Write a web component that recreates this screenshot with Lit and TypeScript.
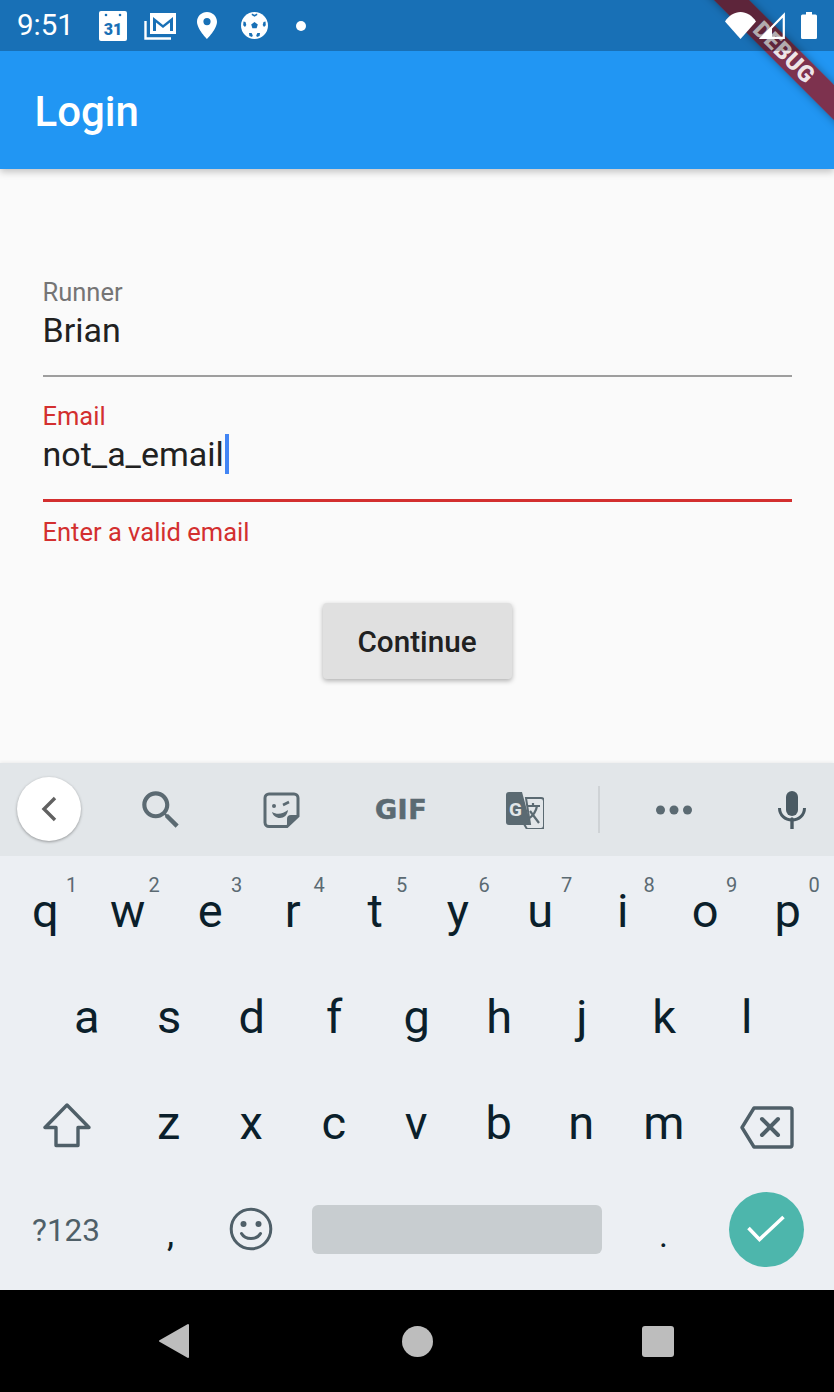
import { LitElement, html, css } from 'lit';
import { customElement } from 'lit/decorators.js';

const ROW1 = [['q', '1'], ['w', '2'], ['e', '3'], ['r', '4'], ['t', '5'], ['y', '6'], ['u', '7'], ['i', '8'], ['o', '9'], ['p', '0']];
const ROW2 = ['a', 's', 'd', 'f', 'g', 'h', 'j', 'k', 'l'];
const ROW3 = ['z', 'x', 'c', 'v', 'b', 'n', 'm'];

const ICON = '#5b6a72';
const SOFT = '#1970b6';

@customElement('app-root')
export class AppRoot extends LitElement {
  static styles = css`
    :host {
      display: flex;
      flex-direction: column;
      position: relative;
      width: 834px;
      height: 1392px;
      overflow: hidden;
      background: #fafafa;
      font-family: Roboto, 'Liberation Sans', sans-serif;
    }
    svg { display: block; }

    /* system bar sits over the app, so it also darkens the debug ribbon */
    .status {
      position: absolute;
      top: 0;
      left: 0;
      right: 0;
      z-index: 3;
      height: 51px;
      display: flex;
      align-items: center;
      background: rgba(0, 0, 0, 0.25);
      color: #fff;
    }
    .time { width: 72.5px; padding-left: 17px; font-size: 29.5px; line-height: 51px; }
    .slot { width: 47px; display: flex; justify-content: center; }
    .status-right { margin-left: auto; display: flex; align-items: center; padding-right: 17px; }
    .wifi { margin-right: 3px; }
    .signal { margin-right: 16px; }

    .appbar {
      height: 169px;
      box-sizing: border-box;
      flex: none;
      display: flex;
      align-items: center;
      padding: 53px 0 0 34.5px;
      background: #2196f3;
      color: #fff;
      font-size: 42px;
      font-weight: 500;
      box-shadow: 0 3px 7px rgba(0, 0, 0, 0.22);
      position: relative;
    }

    main {
      flex: 1;
      display: flex;
      flex-direction: column;
      padding: 109px 42.5px 0;
    }
    .label { font-size: 25.5px; line-height: 28px; color: #757575; }
    .value { font-size: 34px; line-height: 50px; margin-top: -1px; color: #212121; display: flex; align-items: center; }
    .line { height: 2px; background: #9e9e9e; margin-top: 20px; }
    .email { margin-top: 25px; }
    .email .label { color: #d32f2f; }
    .caret { width: 4px; height: 40px; margin-left: 1px; background: #4285f4; }
    .email .line { height: 3px; background: #d32f2f; margin-top: 20px; }
    .error { font-size: 25.5px; line-height: 28px; color: #d32f2f; margin-top: 16px; }
    .continue {
      align-self: center;
      width: 189px;
      height: 76px;
      margin-top: 57px;
      display: flex;
      align-items: center;
      justify-content: center;
      background: #e0e0e0;
      border-radius: 4px;
      color: #212121;
      font-size: 29.7px;
      font-weight: 500;
      box-shadow: 0 2px 5px rgba(0, 0, 0, 0.3);
    }

    .keyboard { flex: none; background: #eceff3; box-shadow: 0 -1px 3px rgba(0, 0, 0, 0.06); }
    .strip {
      height: 93px;
      display: grid;
      grid-template-columns: 98px 126px 114px 126px 122px 26px 124px 98px;
      align-items: center;
      justify-items: center;
      background: #e2e6e9;
    }
    .back {
      width: 64px;
      height: 64px;
      margin-top: -1px;
      border-radius: 50%;
      background: #fff;
      display: flex;
      align-items: center;
      justify-content: center;
      box-shadow: 0 1px 3px rgba(0, 0, 0, 0.35);
    }
    .gif { font-size: 27px; font-weight: 900; color: #5b6a72; letter-spacing: 0.5px; font-family: 'DejaVu Sans', sans-serif; -webkit-text-stroke: 0.6px #5b6a72; }
    .divider { width: 2px; height: 47px; background: #cfd3d6; }
    .mic { margin-left: 14px; }

    .keys { display: flex; flex-direction: column; padding: 2px 0 8px; }
    .row { height: 106px; display: flex; align-items: center; font-size: 47px; color: #0b1f2b; }
    .row.first { padding-left: 4px; }
    .row.second { padding-left: 45.5px; }
    .row.third { padding-left: 24.5px; }
    .row.fourth { padding-left: 24px; }
    .key { position: relative; width: 82.5px; text-align: center; line-height: 60px; }
    .num { position: absolute; top: -7px; left: 62px; font-size: 20px; line-height: 22px; color: #5b6a72; }
    .wide { width: 84px; display: flex; justify-content: center; }
    .shift { margin-top: 5px; margin-right: 19px; }
    .del { margin-left: 20px; margin-top: 9px; }
    .mode { font-size: 31.5px; color: #4f5f68; line-height: 60px; width: 84px; padding-top: 3px; text-align: center; }
    .comma { width: 105px; margin-left: 10px; text-align: center; font-size: 36px; line-height: 60px; padding-top: 10px; }
    .smile { width: 44px; margin-left: 6px; display: flex; justify-content: center; }
    .space { width: 290px; height: 49px; margin-left: 38.5px; background: #c8cdd0; border-radius: 6px; }
    .dot { width: 124px; text-align: center; font-size: 34px; line-height: 60px; padding-top: 12px; }
    .go {
      width: 75px;
      height: 75px;
      margin-left: 3px;
      border-radius: 50%;
      background: #4db6ac;
      display: flex;
      align-items: center;
      justify-content: center;
    }

    .nav {
      flex: none;
      height: 102px;
      display: grid;
      grid-template-columns: 1fr 1fr 1fr;
      align-items: center;
      justify-items: center;
      background: #000;
    }
    .nav > :first-child { margin-left: 70px; }
    .nav > :last-child { margin-right: 74px; }
    .home { width: 31px; height: 31px; border-radius: 50%; background: #bdbdbd; }
    .recent { width: 32px; height: 31px; border-radius: 3px; background: #bdbdbd; }

    .banner {
      position: absolute;
      z-index: 2;
      left: 674px;
      top: 40px;
      width: 220px;
      height: 25px;
      transform: rotate(45deg);
      display: flex;
      align-items: center;
      justify-content: center;
      background: rgba(135, 39, 60, 0.9);
      box-shadow: 0 0 8px rgba(0, 0, 0, 0.35);
      color: rgba(255, 255, 255, 0.9);
      font-size: 23px;
      font-weight: 900;
      letter-spacing: 0.5px;
    }
  `;

  private statusIcons() {
    return html`
      <div class="slot">
        <svg width="28" height="30" viewBox="0 0 28 30">
          <path d="M2 0h24a2 2 0 0 1 2 2v26a2 2 0 0 1-2 2H2a2 2 0 0 1-2-2V2a2 2 0 0 1 2-2z" fill="#fff" />
          <circle cx="7" cy="4" r="1.300" fill="${SOFT}" />
          <circle cx="21" cy="4" r="1.300" fill="${SOFT}" />
          <text x="14" y="24" text-anchor="middle" font-family="Roboto" font-weight="900" font-size="16" fill="${SOFT}">31</text>
        </svg>
      </div>
      <div class="slot">
        <svg width="32" height="28" viewBox="0 0 32 28">
          <path d="M1.500 9v17.500H27" fill="none" stroke="#fff" stroke-width="2.400" />
          <path d="M6 1h26v21H6z" fill="#fff" />
          <path d="M9 19V5l10 8 10-8v14h-3V10.500l-7 5.500-7-5.500V19z" fill="${SOFT}" />
        </svg>
      </div>
      <div class="slot">
        <svg width="20" height="27" viewBox="0 0 20 27">
          <path d="M10 0C4.500 0 0 4.300 0 9.700 0 17 10 27 10 27s10-10 10-17.300C20 4.300 15.500 0 10 0zm0 13.200a3.600 3.600 0 1 1 0-7.200 3.600 3.600 0 0 1 0 7.200z" fill="#fff" />
        </svg>
      </div>
      <div class="slot">
        <svg width="27" height="27" viewBox="0 0 27 27">
          <circle cx="13.500" cy="13.500" r="13.500" fill="#fff" />
          <path d="M13.500 10l3.300 2.400-1.200 3.900h-4.200l-1.200-3.900z" fill="${SOFT}" />
          <path d="M11 1.500l2.500 1.200 2.500-1.200.4 1.500-2.900 1.700L10.600 3zM2.500 9.500l2 .4.800 3-1.300 2-1.800-1.700zM24.500 9.500l-2 .4-.8 3 1.300 2 1.800-1.700zM8 21h2.600l1.200 2.500-.8 1.500-2.600-1.100zM19 21h-2.600l-1.200 2.500.8 1.500 2.600-1.100z" fill="${SOFT}" />
        </svg>
      </div>
      <div class="slot">
        <svg width="10" height="10" viewBox="0 0 10 10"><circle cx="5" cy="5" r="5" fill="#fff" /></svg>
      </div>
    `;
  }

  private statusRight() {
    return html`
      <div class="status-right">
        <svg class="wifi" width="31" height="27" viewBox="0 0 31 27">
          <path d="M0 9.500C4 3.500 9.500 0 15.500 0S27 3.500 31 9.500L15.500 27z" fill="#fff" />
        </svg>
        <svg class="signal" width="26" height="27" viewBox="0 0 26 27">
          <path d="M24.800 3v22.800H2.500z" fill="none" stroke="#fff" stroke-width="2.200" />
          <path d="M13 15.500v10.300H2.500z" fill="#fff" />
        </svg>
        <svg width="16" height="27" viewBox="0 0 16 27">
          <path d="M5 0h6v2.500h3.500A1.500 1.500 0 0 1 16 4v21.500a1.500 1.500 0 0 1-1.500 1.500h-13A1.500 1.500 0 0 1 0 25.500V4a1.500 1.500 0 0 1 1.500-1.500H5z" fill="#fff" />
        </svg>
      </div>
    `;
  }

  private strip() {
    return html`
      <div class="strip">
        <div class="back">
          <svg width="20" height="26" viewBox="0 0 20 26">
            <path d="M16 2L5 13l11 11" fill="none" stroke="#616161" stroke-width="3.400" />
          </svg>
        </div>
        <svg width="50" height="50" viewBox="0 0 24 24">
          <path d="M15.500 14h-.79l-.28-.27C15.410 12.590 16 11.110 16 9.500 16 5.910 13.090 3 9.500 3S3 5.910 3 9.500 5.910 16 9.500 16c1.610 0 3.090-.59 4.230-1.570l.27.28v.79l5 4.990L20.490 19l-4.990-5zm-6 0C7.010 14 5 11.990 5 9.500S7.010 5 9.500 5 14 7.010 14 9.500 11.990 14 9.500 14z" fill="${ICON}" />
        </svg>
        <svg width="37" height="36" viewBox="0 0 37 36">
          <path d="M24 34.500H6a4 4 0 0 1-4-4V6a4 4 0 0 1 4-4h25a4 4 0 0 1 4 4v18z" fill="none" stroke="${ICON}" stroke-width="3" />
          <path d="M35 23l-11 11.500V27a4 4 0 0 1 4-4z" fill="${ICON}" />
          <circle cx="11" cy="14" r="2" fill="${ICON}" />
          <path d="M20 13l6-3" stroke="${ICON}" stroke-width="2.600" fill="none" />
          <path d="M9 20c5 3 11 2 16-2-.5 5-4 8-8 8-4 0-7-2.500-8-6z" fill="${ICON}" />
        </svg>
        <div class="gif">GIF</div>
        <svg width="38" height="38" viewBox="0 0 38 38">
          <path d="M3 1h13l9 33H3a3 3 0 0 1-3-3V4a3 3 0 0 1 3-3z" fill="${ICON}" />
          <path d="M20 7h15a3 3 0 0 1 3 3v25a3 3 0 0 1-3 3H21l-3-5h6z" fill="#e2e6e9" stroke="${ICON}" stroke-width="2" />
          <text x="9.500" y="25" text-anchor="middle" font-family="Roboto" font-weight="700" font-size="19" fill="#e2e6e9">G</text>
          <path d="M21 15h13M27 12v3M31 15c-1 6-4 10-9 13M24 20l9 12" fill="none" stroke="${ICON}" stroke-width="2.200" />
        </svg>
        <div class="divider"></div>
        <svg width="36" height="10" viewBox="0 0 36 10">
          <circle cx="4.500" cy="5" r="4.500" fill="${ICON}" />
          <circle cx="18" cy="5" r="4.500" fill="${ICON}" />
          <circle cx="31.500" cy="5" r="4.500" fill="${ICON}" />
        </svg>
        <svg class="mic" width="28" height="38" viewBox="0 0 28 38">
          <rect x="8" y="0" width="12" height="25" rx="6" fill="#4a5a63" />
          <path d="M1.500 17c0 7 5.500 12 12.500 12s12.500-5 12.500-12" fill="none" stroke="#4a5a63" stroke-width="3" />
          <path d="M14 28v10" stroke="#4a5a63" stroke-width="3.400" stroke-linecap="round" />
        </svg>
      </div>
    `;
  }

  private keys() {
    return html`
      <div class="keys">
        <div class="row first">
          ${ROW1.map(([k, n]) => html`<div class="key">${k}<span class="num">${n}</span></div>`)}
        </div>
        <div class="row second">${ROW2.map((k) => html`<div class="key">${k}</div>`)}</div>
        <div class="row third">
          <div class="wide shift">
            <svg width="48" height="45" viewBox="0 0 48 45">
              <path d="M24 2L2 24.500h11V42.500h22V24.500h11z" fill="none" stroke="#4f5f68" stroke-width="3.400" stroke-linejoin="round" />
            </svg>
          </div>
          ${ROW3.map((k) => html`<div class="key">${k}</div>`)}
          <div class="wide del">
            <svg width="54" height="43" viewBox="0 0 54 43">
              <path d="M14 2h36a2 2 0 0 1 2 2v35a2 2 0 0 1-2 2H14L2 21.500z" fill="none" stroke="#4f5f68" stroke-width="3.400" stroke-linejoin="round" />
              <path d="M22 13l16 16M38 13L22 29" stroke="#4f5f68" stroke-width="4" stroke-linecap="round" />
            </svg>
          </div>
        </div>
        <div class="row fourth">
          <div class="mode">?123</div>
          <div class="comma">,</div>
          <div class="smile">
            <svg width="44" height="44" viewBox="0 0 44 44">
              <circle cx="22" cy="22" r="19.800" fill="none" stroke="#4f5f68" stroke-width="3" />
              <circle cx="14.500" cy="17" r="3" fill="#4f5f68" />
              <circle cx="29.500" cy="17" r="3" fill="#4f5f68" />
              <path d="M12.500 26.500c2 3.500 5.500 5 9.500 5s7.500-1.500 9.500-5" fill="none" stroke="#4f5f68" stroke-width="3" stroke-linecap="round" />
            </svg>
          </div>
          <div class="space"></div>
          <div class="dot">.</div>
          <div class="go">
            <svg width="40" height="30" viewBox="0 0 40 30">
              <path d="M2.500 14l11 11.500L37.500 3" fill="none" stroke="#fff" stroke-width="3.600" />
            </svg>
          </div>
        </div>
      </div>
    `;
  }

  render() {
    return html`
      <div class="status">
        <div class="time">9:51</div>
        ${this.statusIcons()}
        ${this.statusRight()}
      </div>
      <div class="appbar">Login</div>
      <main>
        <div class="field">
          <div class="label">Runner</div>
          <div class="value">Brian</div>
          <div class="line"></div>
        </div>
        <div class="field email">
          <div class="label">Email</div>
          <div class="value">not_a_email<span class="caret"></span></div>
          <div class="line"></div>
        </div>
        <div class="error">Enter a valid email</div>
        <div class="continue">Continue</div>
      </main>
      <div class="keyboard">
        ${this.strip()}
        ${this.keys()}
      </div>
      <div class="nav">
        <svg width="32" height="36" viewBox="0 0 32 36">
          <path d="M30 2v32L2 18z" fill="#bdbdbd" stroke="#bdbdbd" stroke-width="2" stroke-linejoin="round" />
        </svg>
        <div class="home"></div>
        <div class="recent"></div>
      </div>
      <div class="banner">DEBUG</div>
    `;
  }
}
